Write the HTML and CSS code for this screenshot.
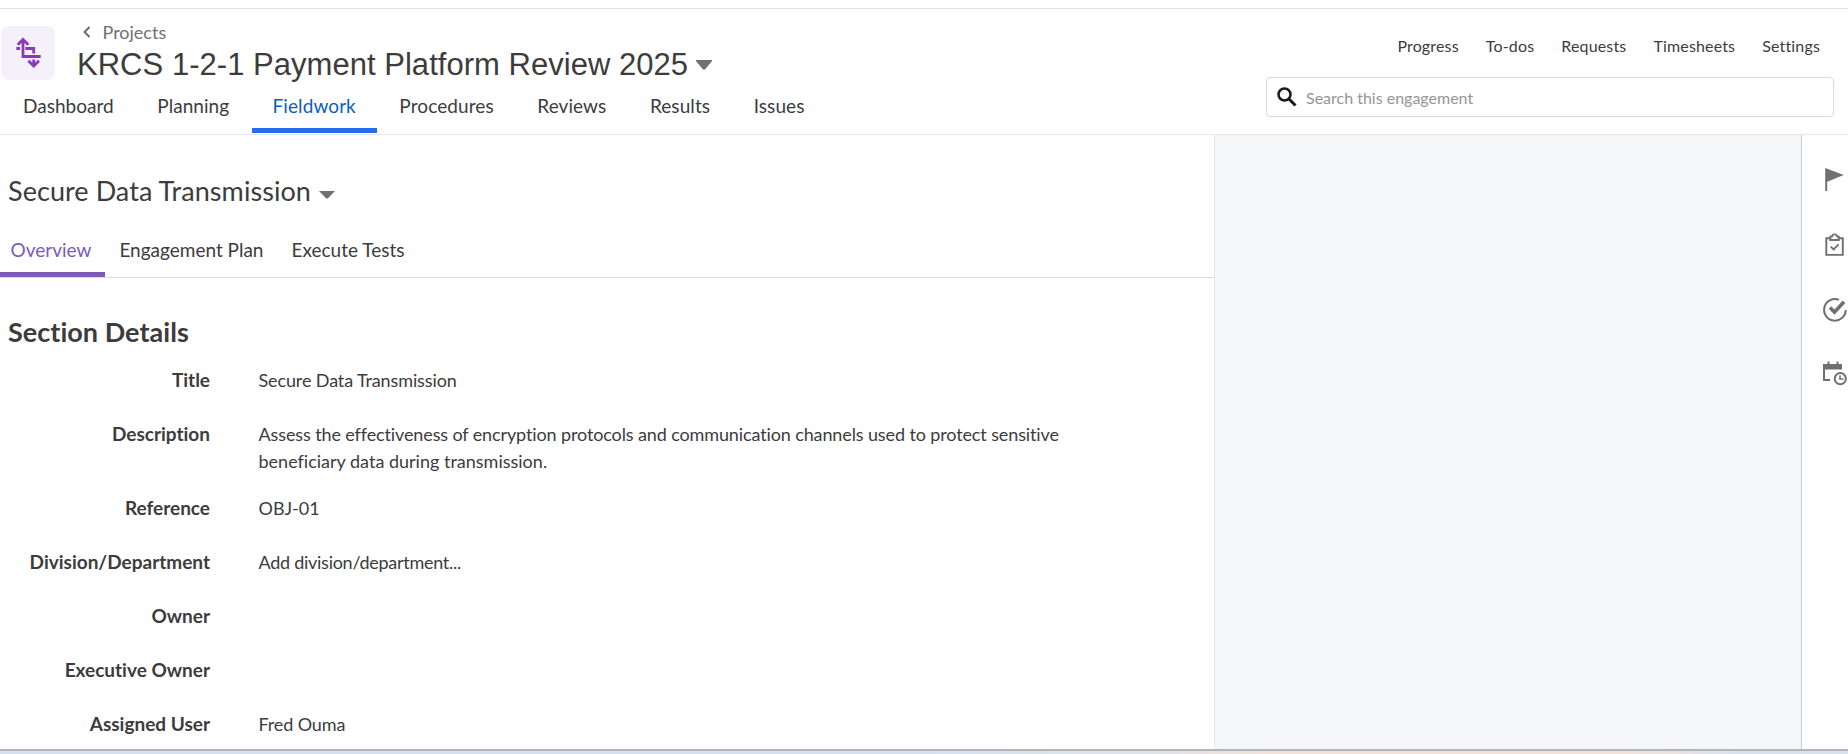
FILE: index.html
```html
<!DOCTYPE html>
<html lang="en">
<head>
<meta charset="utf-8">
<title>KRCS 1-2-1 Payment Platform Review 2025</title>
<link rel="stylesheet" href="styles.css">
</head>
<body>
<div class="app">
  <header class="header">
    <div class="header-left">
      <div class="identity">
        <div class="logo">
          <svg width="54" height="54" viewBox="0 0 54 54" fill="none" stroke="#8a3ab9" stroke-width="2.8">
            <path d="M22 14v16.500h17.700M16.700 18.700 22 13.400l5.300 5.300M15.300 22.500H19M24.300 22.500H32.700v5M32.700 33.500v6M27.400 34.800 32.700 40l5.300-5.200"/>
          </svg>
        </div>
        <div class="titles">
          <a class="crumb"><svg width="8" height="12" viewBox="0 0 8 12" fill="none" stroke="#666" stroke-width="1.8"><path d="M6.500 1 1.500 6l5 5"/></svg><span>Projects</span></a>
          <h1 class="title"><span>KRCS 1-2-1 Payment Platform Review 2025</span><svg width="16" height="10" viewBox="0 0 16 10"><path d="M0 0h16v1L9 9.500H7L0 1z" fill="#707070"/></svg></h1>
        </div>
      </div>
      <nav class="tabs">
        <a class="tab">Dashboard</a><a class="tab">Planning</a><a class="tab active">Fieldwork</a><a class="tab">Procedures</a><a class="tab">Reviews</a><a class="tab">Results</a><a class="tab">Issues</a>
      </nav>
    </div>
    <div class="header-right">
      <nav class="links"><a>Progress</a><a>To-dos</a><a>Requests</a><a>Timesheets</a><a>Settings</a></nav>
      <div class="search">
        <svg width="20" height="20" viewBox="0 0 20 20" fill="none" stroke="#1a1a1a"><circle cx="7.500" cy="7.500" r="6" stroke-width="2.500"/><path d="m12 12 6.500 6.500" stroke-width="3"/></svg>
        <span>Search this engagement</span>
      </div>
    </div>
  </header>
  <div class="body">
    <main class="main">
      <h2 class="section-name"><span>Secure Data Transmission</span><svg width="16" height="8" viewBox="0 0 16 8"><path d="M0 0h16L8.800 7.600H7.200z" fill="#707070"/></svg></h2>
      <nav class="subtabs"><a class="subtab active">Overview</a><a class="subtab">Engagement Plan</a><a class="subtab">Execute Tests</a></nav>
      <h3 class="details-title">Section Details</h3>
      <dl class="details">
        <dt>Title</dt><dd class="snug">Secure Data Transmission</dd>
        <dt>Description</dt><dd class="long"><span class="snug">Assess the effectiveness of encryption protocols and communication channels used to protect sensitive</span><br>beneficiary data during transmission.</dd>
        <dt>Reference</dt><dd>OBJ-01</dd>
        <dt>Division/Department</dt><dd class="tight">Add division/department...</dd>
        <dt>Owner</dt><dd></dd>
        <dt>Executive Owner</dt><dd></dd>
        <dt>Assigned User</dt><dd class="snug">Fred Ouma</dd>
      </dl>
    </main>
    <div class="canvas"></div>
    <aside class="rail">
      <svg width="24" height="24" viewBox="0 0 24 24"><path d="M2.200 0l18.600 7L4.200 13.800V23h-2z" fill="#707070"/></svg>
      <svg width="24" height="24" viewBox="0 0 24 24" fill="none" stroke="#707070" stroke-width="1.900"><path d="M7 5.300H3.300v16.600h16.500V5.300H16M7.300 7V3.600h1.600a2.700 2.700 0 0 1 5.300 0h1.600V7zM7.700 13.600l2.900 2.900 4.900-5.200"/></svg>
      <svg width="24" height="24" viewBox="0 0 24 24" fill="none" stroke="#707070"><path d="M16 1.900A10.800 10.800 0 1 0 22.700 12" stroke-width="2"/><path d="m7 9.500 4.500 4.700L21 3.800" stroke-width="3.600"/></svg>
      <svg width="24" height="24" viewBox="0 0 24 24" fill="none" stroke="#707070"><path d="M0 1h19v5.500H0z" fill="#707070" stroke="none"/><path d="M5.500-1.500V3M14.500-1.500V3M1 6v11h6" stroke-width="2"/><circle cx="17.300" cy="15.700" r="5.600" stroke-width="2"/><path d="M17 12.300V16h3.500" stroke-width="1.600"/></svg>
    </aside>
  </div>
  <footer class="edge"></footer>
</div>
</body>
</html>
```
FILE: styles.css
```css
* { box-sizing: border-box; }
body { margin: 0; background: #fff; color: #3c3c3c; font-family: Lato, sans-serif; font-variant-ligatures: none; }
h1, h2, h3, dl, dd { margin: 0; font-weight: 400; }
svg { display: block; flex: none; overflow: visible; }
.app { display: flex; flex-direction: column; width: 1848px; height: 754px; padding-top: 8px; overflow: hidden; }
.header { display: flex; justify-content: space-between; height: 127px; border-top: 1px solid #e1e1e4; border-bottom: 1px solid #e8e8ee; }
.header-left { display: flex; flex-direction: column; justify-content: space-between; }
.identity { display: flex; gap: 22px; padding: 17px 0 0 1px; }
.logo { width: 54px; height: 54px; border-radius: 8px; background: #f6f0fb; }
.titles { margin-top: -6px; }
.crumb { display: flex; align-items: center; gap: 11.5px; height: 24px; padding-left: 6px; font-size: 18px; line-height: 24px; color: #707070; }
.title { display: flex; align-items: center; gap: 8px; height: 38px; margin-top: 2px; font: 31px/38px "Liberation Sans", Arial, sans-serif; letter-spacing: .03px; }
.tabs { display: flex; gap: 1.5px; padding-left: 2px; }
.tab { height: 42px; padding: 0 21px; font-size: 19px; line-height: 30px; border-bottom: 5px solid transparent; margin-bottom: 1px; letter-spacing: .03px; }
.tab.active { color: #0a5fc4; border-color: #256cf5; letter-spacing: .08px; }
.tab.active ~ .tab { letter-spacing: .09px; }
.header-right { width: 568px; margin-right: 14px; padding-top: 25px; }
.links { display: flex; justify-content: flex-end; gap: 27px; height: 43px; padding-right: 14px; font-size: 16px; line-height: 24px; letter-spacing: .16px; }
.search { display: flex; gap: 9px; height: 40px; padding: 9px 10px; border: 1px solid #d9d9e0; border-radius: 4px; font-size: 16px; line-height: 22px; color: #959595; }
.body { display: flex; flex: 1; min-height: 0; }
.main { width: 1214px; overflow: hidden; }
.section-name { display: flex; align-items: center; gap: 8px; height: 34px; margin-top: 39px; padding-left: 8px; font-size: 27px; line-height: 34px; letter-spacing: .06px; }
.section-name svg { margin-top: 8px; }
.subtabs { display: flex; height: 53px; margin-top: 17px; border-bottom: 1px solid #dcdcdf; }
.subtab { height: 52px; padding: 0 14px; font-size: 19px; line-height: 50px; }
.subtab.active { padding-left: 10.5px; color: #7a5cb8; border-bottom: 5px solid #7a5cb8; }
.details-title { margin-top: 36px; padding-left: 8px; font-size: 27px; font-weight: 700; line-height: 36px; letter-spacing: .04px; }
.details { display: grid; grid-template-columns: 210px 1fr; column-gap: 48.5px; margin-top: 17px; }
.details dt { font-size: 19px; font-weight: 700; line-height: 25px; text-align: right; }
.details dd { min-height: 54px; font-size: 18px; line-height: 27px; }
.details .long { min-height: 74px; }
.details .snug { letter-spacing: -.12px; }
.details .tight { letter-spacing: -.27px; }
.canvas { flex: 1; border-left: 1px solid #e8e8ec; background: #f4f6f8; }
.rail { display: flex; flex-direction: column; gap: 41px; width: 47px; padding: 33px 0 0 21px; border-left: 1px solid #ccc; }
.edge { height: 5px; border-top: 2px solid #b0b6bc; background: linear-gradient(90deg, #d5e2ee 0 50%, #dde2e8 62%, #f3e2da 69% 88%, #d8e2ed 94%); }
```
